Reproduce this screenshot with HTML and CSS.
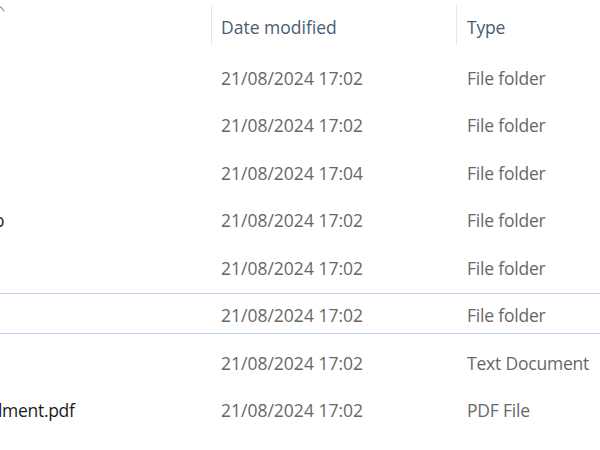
FILE: index.html
```html
<!DOCTYPE html>
<html>
<head>
<meta charset="utf-8">
<link rel="stylesheet" href="styles.css">
</head>
<body>
<div class="list">
  <div class="row header">
    <div class="cell name"><svg class="sort" width="8" height="14" viewBox="0 0 8 14"><path d="M-2 6 L0.5 5 L4.5 9.5" fill="none" stroke="#8a8a8a" stroke-width="1.1"/></svg></div>
    <div class="cell date"><span class="divider"></span>Date modified</div>
    <div class="cell type"><span class="divider"></span>Type</div>
  </div>
  <div class="row"><div class="cell name"></div><div class="cell date">21/08/2024 17:02</div><div class="cell type">File folder</div></div>
  <div class="row"><div class="cell name"></div><div class="cell date">21/08/2024 17:02</div><div class="cell type">File folder</div></div>
  <div class="row"><div class="cell name"></div><div class="cell date">21/08/2024 17:04</div><div class="cell type">File folder</div></div>
  <div class="row"><div class="cell name"><span class="clip-o">o</span></div><div class="cell date">21/08/2024 17:02</div><div class="cell type">File folder</div></div>
  <div class="row"><div class="cell name"></div><div class="cell date">21/08/2024 17:02</div><div class="cell type">File folder</div></div>
  <div class="row hover"><div class="cell name"></div><div class="cell date">21/08/2024 17:02</div><div class="cell type">File folder</div></div>
  <div class="row"><div class="cell name"></div><div class="cell date">21/08/2024 17:02</div><div class="cell type">Text Document</div></div>
  <div class="row"><div class="cell name"><span class="clip-l">lment.pdf</span></div><div class="cell date">21/08/2024 17:02</div><div class="cell type">PDF File</div></div>
</div>
</body>
</html>
```
FILE: styles.css
```css
html, body {
  margin: 0;
  padding: 0;
  background: #ffffff;
  width: 600px;
  height: 450px;
  overflow: hidden;
}
body {
  font-family: "Open Sans", "Noto Sans", sans-serif;
  font-size: 17.5px;
}
.list {
  display: flex;
  flex-direction: column;
}
.row {
  display: grid;
  grid-template-columns: 211px 245px 1fr;
  height: 47.5px;
  align-items: center;
}
.row.header {
  height: 54px;
  align-items: stretch;
}
.header .cell {
  display: flex;
  align-items: center;
  color: #4a5b73;
  position: relative;
}
.header .name {
  align-items: flex-start;
  padding-top: 2px;
}
.sort {
  display: block;
}
.divider {
  position: absolute;
  left: 0;
  top: 5px;
  height: 40px;
  width: 1px;
  background: #e6e6e6;
}
.cell {
  white-space: nowrap;
  overflow: hidden;
}
.date {
  padding-left: 10px;
  color: #676767;
}
.type {
  padding-left: 11px;
  color: #676767;
  letter-spacing: -0.2px;
}
.header .date, .header .type {
  color: #4a5b73;
  padding-bottom: 1px;
}
.name {
  color: #1b1b1b;
}
.clip-o {
  display: inline-block;
  margin-left: -6px;
}
.clip-l {
  display: inline-block;
  margin-left: -2px;
  letter-spacing: -0.3px;
}
.row.hover {
  background:
    linear-gradient(#b8d4f2, #b8d4f2) 0 1.5px / 100% 1px no-repeat,
    linear-gradient(#b8d4f2, #b8d4f2) 0 41.5px / 100% 1px no-repeat;
}
```
